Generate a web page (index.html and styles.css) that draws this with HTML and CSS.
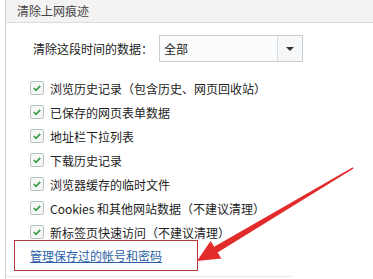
FILE: index.html
```html
<!DOCTYPE html>
<html lang="zh">
<head>
<meta charset="utf-8">
<link rel="stylesheet" href="styles.css">
</head>
<body>
<div class="dialog">
  <div class="titlebar">清除上网痕迹</div>
  <div class="content">
    <div class="range-row">
      <span class="range-label">清除这段时间的数据：</span>
      <div class="select">
        <span class="select-value">全部</span>
        <span class="select-btn"><span class="caret"></span></span>
      </div>
    </div>
    <ul class="options">
      <li><span class="cb"><svg viewBox="0 0 12 12"><path d="M2.8 6.2 L5 8.3 L9.2 3.8" /></svg></span>浏览历史记录（包含历史、网页回收站）</li>
      <li><span class="cb"><svg viewBox="0 0 12 12"><path d="M2.8 6.2 L5 8.3 L9.2 3.8" /></svg></span>已保存的网页表单数据</li>
      <li><span class="cb"><svg viewBox="0 0 12 12"><path d="M2.8 6.2 L5 8.3 L9.2 3.8" /></svg></span>地址栏下拉列表</li>
      <li><span class="cb"><svg viewBox="0 0 12 12"><path d="M2.8 6.2 L5 8.3 L9.2 3.8" /></svg></span>下载历史记录</li>
      <li><span class="cb"><svg viewBox="0 0 12 12"><path d="M2.8 6.2 L5 8.3 L9.2 3.8" /></svg></span>浏览器缓存的临时文件</li>
      <li><span class="cb"><svg viewBox="0 0 12 12"><path d="M2.8 6.2 L5 8.3 L9.2 3.8" /></svg></span>Cookies 和其他网站数据（不建议清理）</li>
      <li><span class="cb"><svg viewBox="0 0 12 12"><path d="M2.8 6.2 L5 8.3 L9.2 3.8" /></svg></span>新标签页快速访问（不建议清理）</li>
    </ul>
    <div class="highlight">
      <a class="manage-link" href="#">管理保存过的帐号和密码</a>
    </div>
  </div>
  <div class="footer-line"></div>
</div>
<svg class="arrow" width="373" height="279" viewBox="0 0 373 279">
  <polygon points="352.8,167.2 353.6,168.6 217.6,252.6 221.3,258.5 197,261 210.6,240.9 214.2,246.8" />
</svg>
</body>
</html>
```
FILE: styles.css
```css
html, body {
  margin: 0;
  padding: 0;
  background: #ffffff;
}
body {
  width: 373px;
  height: 279px;
  overflow: hidden;
  position: relative;
  font-family: "Noto Sans CJK SC", "Microsoft YaHei", sans-serif;
  font-size: 12px;
  color: #222;
}
.dialog {
  margin-left: 5px;
  border-left: 1px solid #d2d2d2;
  height: 279px;
  box-sizing: border-box;
  display: flex;
  flex-direction: column;
}
.titlebar {
  height: 22px;
  line-height: 22px;
  background: #f3f3f3;
  border-bottom: 1px solid #dcdcdc;
  padding-left: 11px;
  color: #444;
  font-size: 12px;
}
.content {
  padding-left: 8px;
}
.range-row {
  display: flex;
  align-items: center;
  margin-top: 12px;
  height: 27px;
  padding-left: 19px;
}
.range-label {
  width: 126px;
  font-size: 12px;
}
.select {
  width: 144px;
  height: 27px;
  box-sizing: border-box;
  border: 1px solid #c9ced2;
  background: #fbfcfd;
  display: flex;
  align-items: center;
}
.select-value {
  flex: 1;
  padding-left: 4px;
}
.select-btn {
  width: 24px;
  height: 25px;
  border-left: 1px solid #d8dcdf;
  background: #f6f7f8;
  display: flex;
  align-items: center;
  justify-content: center;
}
.caret {
  width: 0;
  height: 0;
  border-left: 4px solid transparent;
  border-right: 4px solid transparent;
  border-top: 4px solid #333;
}
.options {
  list-style: none;
  margin: 14px 0 0 0;
  padding: 0 0 0 16px;
}
.options li {
  height: 24px;
  display: flex;
  align-items: center;
  white-space: nowrap;
}
.cb {
  width: 14px;
  height: 14px;
  box-sizing: border-box;
  border: 1px solid #b8c2ba;
  border-radius: 2px;
  background: #f5f8f5;
  margin-right: 6px;
  display: inline-flex;
  align-items: center;
  justify-content: center;
}
.cb svg {
  width: 12px;
  height: 12px;
}
.cb path {
  fill: none;
  stroke: #3a9c4c;
  stroke-width: 1.7;
}
.highlight {
  margin-top: -4px;
  width: 184px;
  height: 31px;
  box-sizing: border-box;
  border: 1px solid #b3393a;
  display: flex;
  align-items: center;
  padding-left: 15px;
}
.manage-link {
  color: #2a5fa8;
  text-decoration: underline;
  font-size: 12px;
  line-height: 14px;
}
.footer-line {
  margin-top: 5px;
  width: 285px;
  border-top: 1px solid #e4e4e4;
}
.arrow {
  position: absolute;
  left: 0;
  top: 0;
}
.arrow polygon {
  fill: #e22b2b;
}
```
